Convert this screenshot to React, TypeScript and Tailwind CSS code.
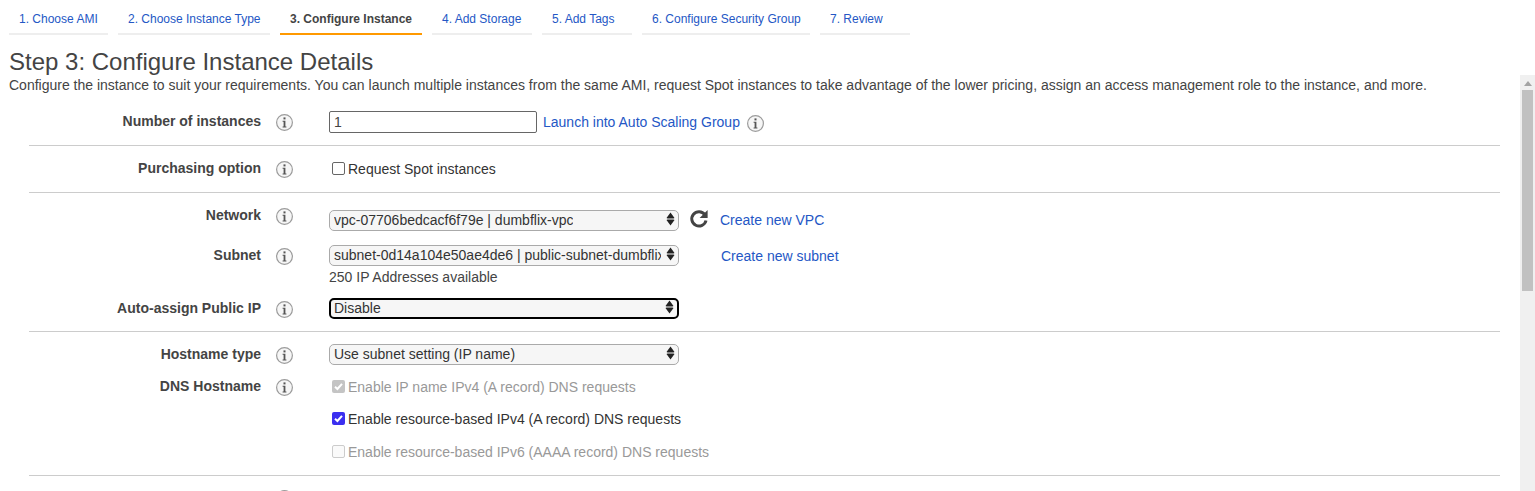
import * as React from "react";

const steps = [
  { label: "1. Choose AMI", width: "w-[99px]" },
  { label: "2. Choose Instance Type", width: "w-[152px]" },
  { label: "3. Configure Instance", width: "w-[142px]", active: true },
  { label: "4. Add Storage", width: "w-[100px]" },
  { label: "5. Add Tags", width: "w-[90px]" },
  { label: "6. Configure Security Group", width: "w-[168px]" },
  { label: "7. Review", width: "w-[90px]" },
];

function InfoIcon() {
  return (
    <svg width="17" height="17" viewBox="0 0 17 17" className="block">
      <circle cx="8.5" cy="8.5" r="7.9" fill="#f6f6f6" stroke="#9c9c9c" strokeWidth="1.2" />
      <rect x="7.5" y="3.4" width="2" height="2" fill="#555" />
      <path d="M6.6 6.8 H9.4 V12.4 H10.4 V13.4 H6.6 V12.4 H7.6 V7.8 H6.6 Z" fill="#555" />
    </svg>
  );
}

function Label({ text, top }: { text: string; top?: string }) {
  return (
    <div className={`flex w-[329px] shrink-0 items-start ${top ?? ""}`}>
      <div className="w-[261px] text-right text-sm font-bold leading-4 text-[#444]">{text}</div>
      <div className="ml-[15px] mt-[1px]">
        <InfoIcon />
      </div>
    </div>
  );
}

function SelectBox({ value, focused, clip }: { value: string; focused?: boolean; clip?: boolean }) {
  return (
    <div
      className={`relative flex h-[21px] w-[350px] rounded-[5px] bg-[#f6f6f6] text-sm text-[#333] ${
        focused ? "border-2 border-black pl-[3px] leading-[17px]" : "border border-[#aaa] pl-[4px] leading-[19px]"
      }`}
    >
      <span className={`overflow-hidden whitespace-nowrap ${clip ? "w-[327px]" : ""}`}>{value}</span>
      <svg
        className={`absolute right-[3px] ${focused ? "top-0" : "top-[1px]"}`}
        width="9"
        height="14"
        viewBox="0 0 9 14"
      >
        <path d="M4.5 0.5 L8.5 6 L7.5 6.6 H1.5 L0.5 6 Z M1.5 7.6 H7.5 L8.5 8 L4.5 13.5 L0.5 8 Z" fill="#222" />
      </svg>
    </div>
  );
}

function CheckRow({ label, state }: { label: string; state: "on" | "off" | "disabledOn" | "disabledOff" }) {
  const disabled = state === "disabledOn" || state === "disabledOff";
  return (
    <div className={`flex h-4 items-start text-sm leading-4 ${disabled ? "text-[#999]" : "text-[#333]"}`}>
      <span
        className={`ml-[3px] mr-[3px] mt-[1px] flex h-[13px] w-[13px] items-center justify-center rounded-[2px] ${
          state === "on"
            ? "bg-[#3b2ff0]"
            : state === "disabledOn"
              ? "bg-[#c4c4c4]"
              : state === "disabledOff"
                ? "border border-[#ccc] bg-[#fafafa]"
                : "border border-[#666] bg-white"
        }`}
      >
        {(state === "on" || state === "disabledOn") && (
          <svg width="11" height="11" viewBox="0 0 11 11">
            <path d="M2 5.8 L4.4 8 L9 2.8" fill="none" stroke="white" strokeWidth="2" />
          </svg>
        )}
      </span>
      {label}
    </div>
  );
}

function Divider() {
  return <div className="ml-[29px] mr-[35px] border-t border-[#ccc]" />;
}

export default function App() {
  return (
    <div className="relative h-[491px] overflow-hidden bg-white font-['Liberation_Sans',Arial,sans-serif] text-[#444]">
      {/* wizard tabs */}
      <div className="ml-[9px] flex h-[35px] gap-[10px] pt-[11px] text-xs">
        {steps.map((s) => (
          <div
            key={s.label}
            className={`${s.width} h-[24px] pl-[10px] leading-[16px] ${
              s.active
                ? "border-b-2 border-[#f90] font-bold text-[#444]"
                : "border-b-2 border-[#eee] text-[#2457c5]"
            }`}
          >
            {s.label}
          </div>
        ))}
      </div>

      <h1 className="ml-[9px] mt-[13px] text-2xl font-normal leading-[28px] text-[#444]">
        Step 3: Configure Instance Details
      </h1>
      <p className="ml-[9px] mt-[1px] text-sm leading-4 text-[#444]">
        Configure the instance to suit your requirements. You can launch multiple instances from the same AMI, request
        Spot instances to take advantage of the lower pricing, assign an access management role to the instance, and
        more.
      </p>

      {/* form */}
      <div className="mt-[18px]">
        <div className="flex h-[34px]">
          <Label text="Number of instances" top="mt-[2px]" />
          <div className="flex h-[22px] w-[208px] items-center rounded-[2px] border border-[#666] pl-[4px] text-sm text-[#444]">
            1
          </div>
          <a className="ml-[6px] mt-[1px] text-sm leading-[20px] text-[#2457c5]">Launch into Auto Scaling Group</a>
          <div className="ml-[7px] mt-[4px]">
            <InfoIcon />
          </div>
        </div>
        <Divider />

        <div className="flex h-[46px] pt-[14px]">
          <Label text="Purchasing option" />
          <div className="mt-[1px]">
            <CheckRow label="Request Spot instances" state="off" />
          </div>
        </div>
        <Divider />

        <div className="flex h-[52px] pt-[14px]">
          <Label text="Network" />
          <div className="mt-[3px]">
            <SelectBox value="vpc-07706bedcacf6f79e | dumbflix-vpc" />
          </div>
          <svg className="ml-[10px] mt-[2px]" width="20" height="20" viewBox="0 0 20 20">
            <path d="M15.8 5.6 A7.2 7.2 0 1 0 17 11.5" fill="none" stroke="#444" strokeWidth="3" />
            <path d="M18.6 1 V9 H10.6 Z" fill="#444" />
          </svg>
          <a className="ml-[11px] mt-[3px] text-sm leading-5 text-[#2457c5]">Create new VPC</a>
        </div>

        <div className="flex h-[53px]">
          <Label text="Subnet" top="mt-[2px]" />
          <div>
            <SelectBox value="subnet-0d14a104e50ae4de6 | public-subnet-dumbflix" clip />
            <div className="mt-[3px] text-sm leading-4 text-[#444]">250 IP Addresses available</div>
          </div>
          <a className="ml-[42px] mt-[1px] text-sm leading-5 text-[#2457c5]">Create new subnet</a>
        </div>

        <div className="flex h-[33px]">
          <Label text="Auto-assign Public IP" top="mt-[2px]" />
          <SelectBox value="Disable" focused />
        </div>
        <Divider />

        <div className="flex h-[46px] pt-[12px]">
          <Label text="Hostname type" top="mt-[2px]" />
          <SelectBox value="Use subnet setting (IP name)" />
        </div>

        <div className="flex h-[97px]">
          <Label text="DNS Hostname" />
          <div className="mt-[1px] flex flex-col">
            <CheckRow label="Enable IP name IPv4 (A record) DNS requests" state="disabledOn" />
            <div className="mt-4">
              <CheckRow label="Enable resource-based IPv4 (A record) DNS requests" state="on" />
            </div>
            <div className="mt-[17px]">
              <CheckRow label="Enable resource-based IPv6 (AAAA record) DNS requests" state="disabledOff" />
            </div>
          </div>
        </div>
        <Divider />

        <div className="mt-[14px] flex">
          <div className="w-[276px]" />
          <InfoIcon />
        </div>
      </div>

      {/* scrollbar of the inner panel */}
      <div className="absolute bottom-0 right-0 top-[75px] w-[15px] bg-[#f0f0f0]">
        <svg className="absolute left-[4px] top-[6px]" width="8" height="6" viewBox="0 0 8 6">
          <path d="M4 0 L8 5 H0 Z" fill="#a3a3a3" />
        </svg>
        <div className="absolute left-[2px] top-[15px] h-[201px] w-[11px] bg-[#c1c1c1]" />
      </div>
    </div>
  );
}
